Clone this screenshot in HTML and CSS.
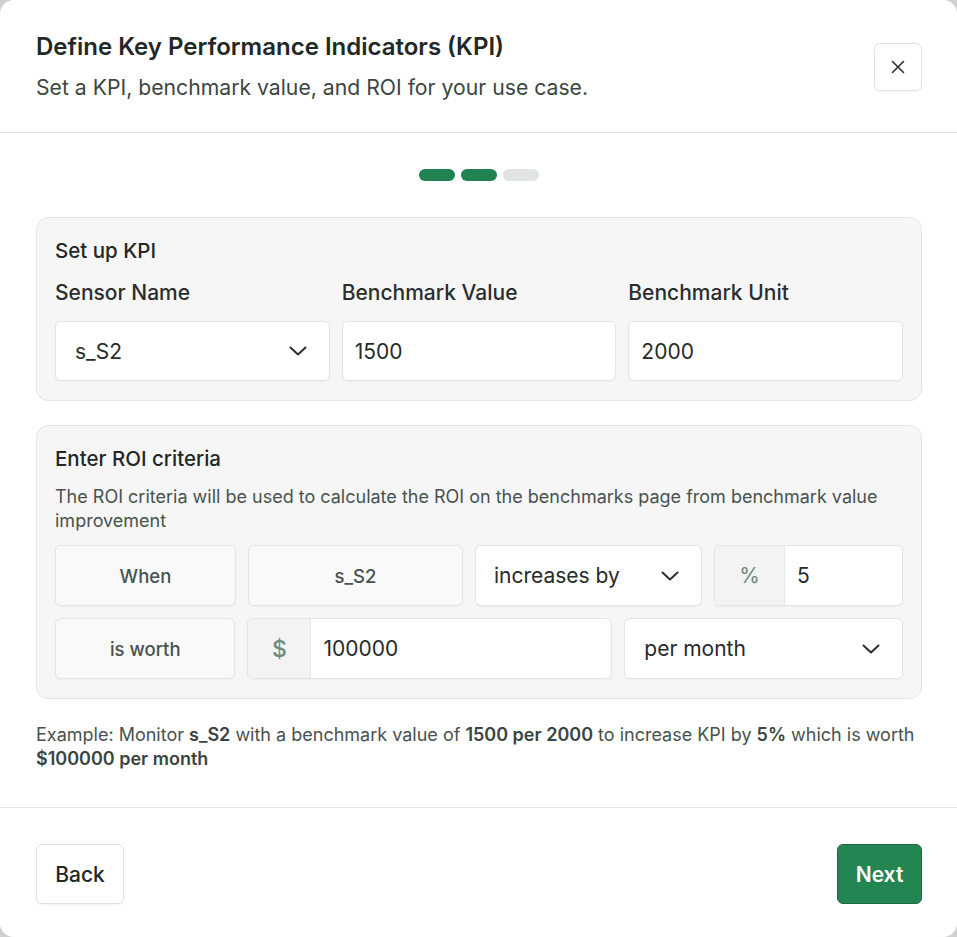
FILE: index.html
```html
<!DOCTYPE html>
<html lang="en">
<head>
<meta charset="utf-8">
<title>Define KPI</title>
<link rel="stylesheet" href="styles.css">
</head>
<body>
<div class="modal">
  <header class="modal-header">
    <div class="header-text">
      <h1 class="title">Define Key Performance Indicators (KPI)</h1>
      <p class="subtitle">Set a KPI, benchmark value, and ROI for your use case.</p>
    </div>
    <button class="close-btn" aria-label="Close">
      <svg width="14" height="14" viewBox="0 0 14 14"><path d="M1.5 1.5 L12.5 12.5 M12.5 1.5 L1.5 12.5" stroke="#2b2f2d" stroke-width="1.6" stroke-linecap="round" fill="none"/></svg>
    </button>
  </header>

  <main class="modal-body">
    <div class="stepper">
      <span class="step active"></span>
      <span class="step active"></span>
      <span class="step"></span>
    </div>

    <section class="card">
      <h2 class="card-title">Set up KPI</h2>
      <div class="kpi-grid">
        <div class="field">
          <label class="field-label">Sensor Name</label>
          <div class="control select">
            <span>s_S2</span>
            <svg class="chev" width="18" height="10" viewBox="0 0 18 10"><path d="M1.5 1.5 L9 8.5 L16.5 1.5" stroke="#2b2f2d" stroke-width="2" fill="none" stroke-linecap="round" stroke-linejoin="round"/></svg>
          </div>
        </div>
        <div class="field">
          <label class="field-label">Benchmark Value</label>
          <div class="control input">1500</div>
        </div>
        <div class="field">
          <label class="field-label">Benchmark Unit</label>
          <div class="control input">2000</div>
        </div>
      </div>
    </section>

    <section class="card card-roi">
      <h2 class="card-title">Enter ROI criteria</h2>
      <p class="card-desc">The ROI criteria will be used to calculate the ROI on the benchmarks page from benchmark value improvement</p>
      <div class="roi-row row-one">
        <div class="chip">When</div>
        <div class="chip">s_S2</div>
        <div class="control select">
          <span>increases by</span>
          <svg class="chev" width="18" height="10" viewBox="0 0 18 10"><path d="M1.5 1.5 L9 8.5 L16.5 1.5" stroke="#2b2f2d" stroke-width="2" fill="none" stroke-linecap="round" stroke-linejoin="round"/></svg>
        </div>
        <div class="group">
          <span class="addon addon-pct">%</span>
          <span class="group-input">5</span>
        </div>
      </div>
      <div class="roi-row row-two">
        <div class="chip">is worth</div>
        <div class="group">
          <span class="addon addon-dollar">$</span>
          <span class="group-input">100000</span>
        </div>
        <div class="control select">
          <span>per month</span>
          <svg class="chev" width="18" height="10" viewBox="0 0 18 10"><path d="M1.5 1.5 L9 8.5 L16.5 1.5" stroke="#2b2f2d" stroke-width="2" fill="none" stroke-linecap="round" stroke-linejoin="round"/></svg>
        </div>
      </div>
    </section>

    <p class="example">Example: Monitor <b>s_S2</b> with a benchmark value of <b>1500 per 2000</b> to increase KPI by <b>5%</b> which is worth <b>$100000 per month</b></p>
  </main>

  <footer class="modal-footer">
    <button class="btn btn-back">Back</button>
    <button class="btn btn-next">Next</button>
  </footer>
</div>
</body>
</html>
```

FILE: styles.css
```css
* { box-sizing: border-box; }

html, body {
  margin: 0;
  padding: 0;
}

body {
  background: #cfd1d0;
  font-family: Inter, "Noto Sans", "Liberation Sans", sans-serif;
  color: #262b29;
}

.modal {
  width: 957px;
  height: 937px;
  background: #ffffff;
  border-radius: 14px;
  overflow: hidden;
  display: flex;
  flex-direction: column;
}

.modal-header {
  display: flex;
  justify-content: space-between;
  align-items: center;
  padding: 33px 35px 31px 36px;
  border-bottom: 1px solid #e3e5e4;
}

.title {
  margin: 0;
  font-size: 24px;
  line-height: 28px;
  font-weight: 600;
  color: #222826;
}

.subtitle {
  margin: 12px 0 0;
  font-size: 21.2px;
  line-height: 28px;
  color: #3c4642;
}

.close-btn {
  width: 48px;
  height: 48px;
  border: 1px solid #e1e3e2;
  border-radius: 6px;
  background: #fff;
  box-shadow: 0 1px 2px rgba(0,0,0,0.06);
  display: flex;
  align-items: center;
  justify-content: center;
  padding: 0;
  margin-top: 0;
}

.modal-body {
  padding: 36px 35px 36px 36px;
  border-bottom: 1px solid #e3e5e4;
}

.stepper {
  display: flex;
  justify-content: center;
  gap: 6px;
  margin-bottom: 36px;
}

.step {
  width: 36px;
  height: 12px;
  border-radius: 6px;
  background: #e0e4e3;
}

.step.active { background: #228352; }

.card {
  background: #f6f6f6;
  border: 1px solid #e4e5e5;
  border-radius: 12px;
  padding: 19px 18px 19px 18px;
}

.card-roi { margin-top: 24px; }

.card-title {
  margin: 0;
  font-size: 20.5px;
  line-height: 28px;
  font-weight: 500;
  color: #232826;
}

.kpi-grid {
  margin-top: 14px;
  display: grid;
  grid-template-columns: 1fr 1fr 1fr;
  gap: 12px;
}

.field-label {
  display: block;
  font-size: 21px;
  line-height: 28px;
  font-weight: 500;
  color: #2a2e2c;
  margin-bottom: 14px;
}

.control {
  height: 60px;
  background: #fff;
  border: 1px solid #e3e4e4;
  border-radius: 6px;
  box-shadow: 0 1px 2px rgba(0,0,0,0.04);
  display: flex;
  align-items: center;
  font-size: 21px;
  color: #262b29;
}

.input { padding: 0 12px; }

.select {
  padding: 0 22px 0 19px;
  justify-content: space-between;
}

.card-desc {
  margin: 12px 0 12px;
  font-size: 18px;
  line-height: 24px;
  color: #48524e;
}

.roi-row {
  display: grid;
  gap: 12px;
}

.row-one { grid-template-columns: 180fr 214fr 226fr 188fr; }
.row-two { grid-template-columns: 180fr 364fr 278fr; margin-top: 12px; }

.row-one .select { padding-left: 18px; padding-right: 22px; }

.chip {
  height: 61px;
  background: #f9f9f9;
  border: 1px solid #e4e5e5;
  border-radius: 6px;
  box-shadow: 0 1px 2px rgba(0,0,0,0.04);
  display: flex;
  align-items: center;
  justify-content: center;
  font-size: 18.5px;
  font-weight: 500;
  color: #48524e;
}

.row-one .control, .row-two .control { height: 61px; }

.group {
  height: 61px;
  display: flex;
  border: 1px solid #e3e4e4;
  border-radius: 6px;
  overflow: hidden;
  box-shadow: 0 1px 2px rgba(0,0,0,0.04);
  background: #fff;
}

.addon {
  background: #f3f3f3;
  display: flex;
  align-items: center;
  justify-content: center;
  color: #6e8a7b;
  border-right: 1px solid #e7e8e8;
}

.addon-pct { width: 70px; font-size: 21px; }
.addon-dollar { width: 63px; font-size: 23px; font-weight: 500; }

.group-input {
  flex: 1;
  display: flex;
  align-items: center;
  padding: 0 12px;
  font-size: 21px;
  color: #262b29;
}

.example {
  margin: 24px 0 0;
  font-size: 18px;
  line-height: 24px;
  color: #48524e;
}

.example b {
  font-weight: 600;
  color: #3a4440;
}

.modal-footer {
  display: flex;
  justify-content: space-between;
  padding: 36px 35px 0 36px;
}

.btn {
  height: 60px;
  border-radius: 6px;
  font-family: inherit;
  font-size: 21px;
  padding: 0 10px;
}

.btn-back {
  background: #fff;
  border: 1px solid #e1e3e2;
  box-shadow: 0 1px 2px rgba(0,0,0,0.06);
  color: #222826;
  font-weight: 500;
  width: 88px;
}

.btn-next {
  background: #238552;
  border: 1px solid #1b6b40;
  color: #ffffff;
  font-weight: 600;
  width: 85px;
}
```
